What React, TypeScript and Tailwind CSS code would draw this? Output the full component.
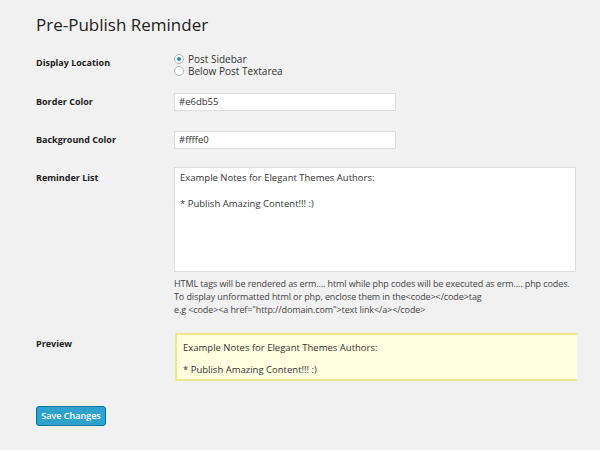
export default function App() {
  const f = { fontFamily: '"Open Sans", sans-serif' };
  return (
    <div style={f} className="w-[600px] h-[450px] bg-[#f1f1f1] text-[#333] pl-[36px] pt-[14px] overflow-hidden">
      <h1 className="text-[17px] text-[#222] leading-[22px] mb-[17px]">Pre-Publish Reminder</h1>
      <div className="flex">
        <div className="w-[138px] text-[9px] font-bold pt-[3px] text-[#222]">Display Location</div>
        <div className="text-[10px] leading-[12px]">
          <div className="flex items-center gap-[4px]">
            <span className="w-[10px] h-[10px] rounded-full border border-[#b4b9be] bg-white flex items-center justify-center"><span className="w-[4px] h-[4px] rounded-full bg-[#1e8cbe]" /></span>
            Post Sidebar
          </div>
          <div className="flex items-center gap-[4px]">
            <span className="w-[10px] h-[10px] rounded-full border border-[#b4b9be] bg-white" />
            Below Post Textarea
          </div>
        </div>
      </div>
      <div className="flex items-center mt-[16px]">
        <div className="w-[138px] text-[9px] font-bold text-[#222]">Border Color</div>
        <div className="w-[222px] h-[18px] bg-white border border-[#ddd] text-[9.5px] px-[4px] leading-[16px]">#e6db55</div>
      </div>
      <div className="flex items-center mt-[20px]">
        <div className="w-[138px] text-[9px] font-bold text-[#222]">Background Color</div>
        <div className="w-[222px] h-[18px] bg-white border border-[#ddd] text-[9.5px] px-[4px] leading-[16px]">#ffffe0</div>
      </div>
      <div className="flex mt-[18px]">
        <div className="w-[138px] text-[9px] font-bold text-[#222] pt-[4px]">Reminder List</div>
        <div>
          <div className="w-[402px] h-[105px] bg-white border border-[#ddd] text-[9.5px] px-[5px] pt-[3px] leading-[13px]">
            <p>Example Notes for Elegant Themes Authors:</p>
            <p className="mt-[13px]">* Publish Amazing Content!!! :)</p>
          </div>
          <div className="text-[9px] leading-[13px] mt-[5px] text-[#444] whitespace-nowrap tracking-[-0.1px]">
            <p>HTML tags will be rendered as erm.... html while php codes will be executed as erm.... php codes.</p>
            <p>To display unformatted html or php, enclose them in the&lt;code&gt;&lt;/code&gt;tag</p>
            <p>e.g &lt;code&gt;&lt;a href="http://domain.com"&gt;text link&lt;/a&gt;&lt;/code&gt;</p>
          </div>
        </div>
      </div>
      <div className="flex mt-[17px]">
        <div className="w-[139px] text-[9px] font-bold text-[#222] pt-[4px]">Preview</div>
        <div className="w-[402px] h-[48px] bg-[#ffffe0] border-2 border-[#f0e68c] border-r-0 text-[9.5px] px-[6px] pt-[6px] leading-[13px]">
          <p>Example Notes for Elegant Themes Authors:</p>
          <p className="mt-[9px]">* Publish Amazing Content!!! :)</p>
        </div>
      </div>
      <button className="mt-[25px] w-[70px] h-[20px] bg-[#2ea2cc] border border-[#0074a2] rounded-[3px] text-white text-[9px] font-semibold">Save Changes</button>
    </div>
  );
}
